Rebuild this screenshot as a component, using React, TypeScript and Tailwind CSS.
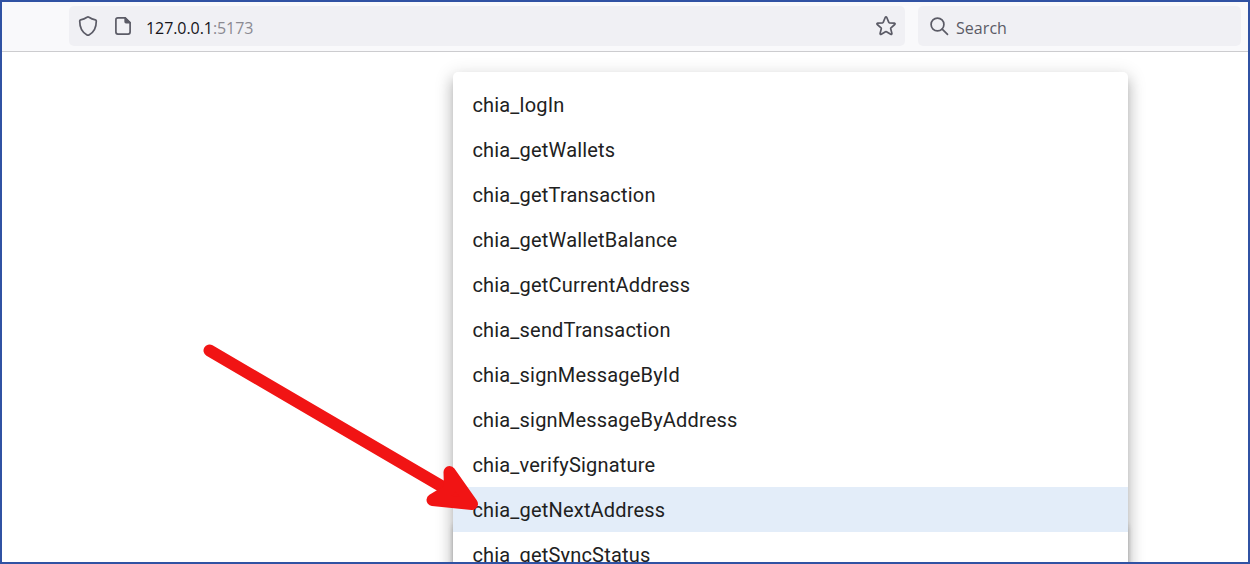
const commands = [
  'chia_logIn',
  'chia_getWallets',
  'chia_getTransaction',
  'chia_getWalletBalance',
  'chia_getCurrentAddress',
  'chia_sendTransaction',
  'chia_signMessageById',
  'chia_signMessageByAddress',
  'chia_verifySignature',
  'chia_getNextAddress',
  'chia_getSyncStatus',
];

const SELECTED = 'chia_getNextAddress';

function ShieldIcon() {
  return (
    <svg className="h-5 w-5 shrink-0" viewBox="0 0 20 20" fill="none" stroke="#5b5b66" strokeWidth="1.7" strokeLinejoin="round">
      <path d="M10 .9 Q10.5 .9 11 1.3 C13 2.7 15.1 3.5 17.4 3.9 Q18.3 4.1 18.3 5 C18.3 11 16 16.4 11 18.9 Q10 19.4 9 18.9 C4 16.4 1.7 11 1.7 5 Q1.7 4.1 2.6 3.9 C4.9 3.5 7 2.7 9 1.3 Q9.5 .9 10 .9 Z" />
    </svg>
  );
}

function PageIcon() {
  return (
    <svg className="h-[18px] w-4 shrink-0" viewBox="0 0 16 18" fill="none" stroke="#5b5b66" strokeWidth="1.7" strokeLinejoin="round">
      <path d="M10.2.9H2.9a2 2 0 0 0-2 2v12.2a2 2 0 0 0 2 2h10.2a2 2 0 0 0 2-2V5.8z" />
      <path d="M10.2 1v3.8a.8.8 0 0 0 .8.8h4z" fill="#5b5b66" />
    </svg>
  );
}

function StarIcon() {
  return (
    <svg className="h-5 w-5 shrink-0" viewBox="0 0 20 20" fill="none" stroke="#5b5b66" strokeWidth="1.7" strokeLinejoin="round">
      <path d="M9.2 1.5Q10 .3 10.8 1.5L12.8 6.3Q13 6.7 13.5 6.8L18.3 7.2Q19.7 7.5 18.7 8.5L15 11.8Q14.6 12.2 14.7 12.7L15.9 17.4Q16 18.9 14.7 18.3L10.5 15.8Q10 15.5 9.5 15.8L5.3 18.3Q4 18.9 4.1 17.4L5.3 12.7Q5.4 12.2 5 11.8L1.3 8.5Q.3 7.5 1.7 7.2L6.5 6.8Q7 6.7 7.2 6.3Z" />
    </svg>
  );
}

function SearchIcon() {
  return (
    <svg className="h-[19px] w-[19px] shrink-0" viewBox="0 0 19 19" fill="none" stroke="#5b5b66" strokeWidth="1.7" strokeLinecap="round">
      <circle cx="7.5" cy="7.5" r="6.4" />
      <path d="M12.2 12.2 17.5 17.4" />
    </svg>
  );
}

function Toolbar() {
  return (
    <header className="flex h-[50px] shrink-0 gap-[13px] border-b border-[#cccccf] bg-[#f9f9fb] pt-1 pr-[7px] pl-[67px] font-['Open_Sans','Noto_Sans',sans-serif] text-[16px]">
      <div className="flex h-10 w-[836px] items-center rounded-[5px] bg-[#f0f0f4] pr-[9px] pl-[9px]">
        <ShieldIcon />
        <span className="ml-[17px] flex">
          <PageIcon />
        </span>
        <span className="mt-1 ml-[15px] tracking-[-0.07px] text-[#15141a]">
          127.0.0.1<span className="text-[#8b8a92]">:5173</span>
        </span>
        <span className="ml-auto flex">
          <StarIcon />
        </span>
      </div>
      <div className="flex h-10 grow items-center rounded-[5px] bg-[#f0f0f4] pl-3">
        <SearchIcon />
        <span className="mt-1 ml-[7px] tracking-[0.05px] text-[#5b5b66]">Search</span>
      </div>
    </header>
  );
}

export default function App() {
  return (
    <div className="relative flex h-[564px] w-[1250px] flex-col overflow-hidden border-2 border-[#3052a3] bg-white">
      <Toolbar />
      <main className="relative flex min-h-0 grow overflow-hidden pt-5 pl-[451px]">
        <div className="absolute top-[470px] left-[451px] h-40 w-[675px] rounded-[5px] shadow-[0_2px_5px_rgba(0,0,0,0.16),0_1px_6px_rgba(0,0,0,0.06)]" />
        <ul className="relative h-[600px] w-[675px] shrink-0 rounded-[5px] bg-white py-2.5 font-[Roboto,sans-serif] text-[20px] tracking-[0.1876px] text-[#212121] shadow-[0_6.25px_6.25px_-3.75px_rgba(0,0,0,0.2),0_10px_12.5px_1.25px_rgba(0,0,0,0.14),0_3.75px_17.5px_2.5px_rgba(0,0,0,0.12)]">
          {commands.map((name) => (
            <li
              key={name}
              className={`flex h-[45px] items-center pr-5 pl-[19.4px] ${name === SELECTED ? 'bg-[#e3edf9]' : ''}`}
            >
              {name}
            </li>
          ))}
        </ul>
      </main>
      <svg className="absolute top-[338px] left-[198px] h-[180px] w-[290px]" viewBox="200 340 290 180" fill="#f11414" stroke="#f11414" strokeLinejoin="round" strokeLinecap="round">
        <path d="M209.5 350.5 448 490" strokeWidth="12" />
        <path d="M449.5 472 472 504 432.5 500 450 489.5Z" strokeWidth="12" />
      </svg>
    </div>
  );
}
